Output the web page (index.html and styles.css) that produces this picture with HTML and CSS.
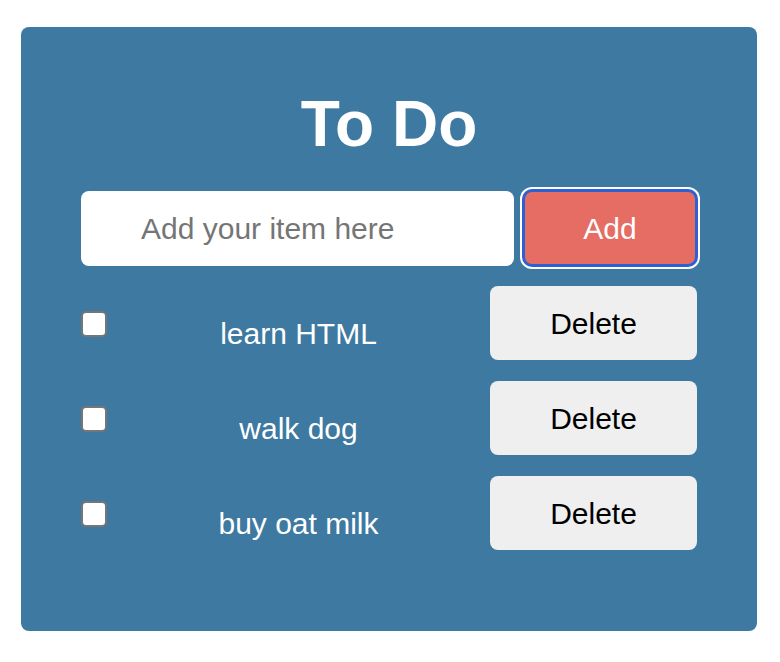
FILE: index.html
```html
<!DOCTYPE html>
<html>
<head>
<meta charset="utf-8">
<link rel="stylesheet" href="styles.css">
</head>
<body>
<main class="panel">
  <h1 class="title">To Do</h1>
  <form class="add-row">
    <input class="item-input" type="text" placeholder="Add your item here">
    <button class="add-btn" type="button">Add</button>
  </form>
  <ul class="list">
    <li class="item">
      <input class="check" type="checkbox">
      <span class="item-text">learn HTML</span>
      <button class="del-btn" type="button">Delete</button>
    </li>
    <li class="item">
      <input class="check" type="checkbox">
      <span class="item-text">walk dog</span>
      <button class="del-btn" type="button">Delete</button>
    </li>
    <li class="item">
      <input class="check" type="checkbox">
      <span class="item-text">buy oat milk</span>
      <button class="del-btn" type="button">Delete</button>
    </li>
  </ul>
</main>
</body>
</html>
```

FILE: styles.css
```css
html, body {
  margin: 0;
  padding: 0;
  background: #ffffff;
}

body {
  padding: 27px 23px 31px 21px;
  font-family: "Liberation Sans", Arial, Helvetica, sans-serif;
}

.panel {
  width: 616px;
  background: #3e79a1;
  border-radius: 8px;
  padding: 60px 60px 60px 60px;
}

.title {
  margin: 0 0 28px 0;
  text-align: center;
  color: #ffffff;
  font-size: 64px;
  font-weight: bold;
  line-height: 74px;
}

.add-row {
  display: flex;
  align-items: center;
  gap: 8px;
  margin: 0 0 19px 0;
}

.item-input {
  flex: 1;
  min-width: 0;
  height: 75px;
  box-sizing: border-box;
  border: none;
  border-radius: 8px;
  background: #ffffff;
  padding: 2px 0 0 60px;
  font-family: inherit;
  font-size: 30px;
  color: #222;
  outline: none;
}

.item-input::placeholder {
  color: #757575;
}

.add-btn {
  width: 176px;
  height: 78px;
  box-sizing: border-box;
  border: 3px solid #2d60d2;
  border-radius: 10px;
  background: #e56d63;
  color: #ffffff;
  font-family: inherit;
  font-size: 30px;
  box-shadow: 0 0 0 2px #ffffff;
  padding: 2px 0 0 0;
  margin-right: -1px;
}

.list {
  list-style: none;
  margin: 0;
  padding: 0 0 21px 0;
  display: flex;
  flex-direction: column;
  gap: 21px;
}

.item {
  display: flex;
  align-items: center;
  height: 74px;
}

.check {
  appearance: none;
  -webkit-appearance: none;
  width: 26px;
  height: 26px;
  margin: 2px 0 0 0;
  box-sizing: border-box;
  border: 2px solid #767676;
  border-radius: 5px;
  background: #ffffff;
}

.item-text {
  flex: 1;
  text-align: center;
  color: #ffffff;
  font-size: 30px;
  padding-top: 21px;
}

.del-btn {
  width: 207px;
  height: 74px;
  border: none;
  border-radius: 8px;
  background: #efefef;
  color: #000000;
  font-family: inherit;
  font-size: 30px;
  padding: 2px 0 0 0;
}
```
